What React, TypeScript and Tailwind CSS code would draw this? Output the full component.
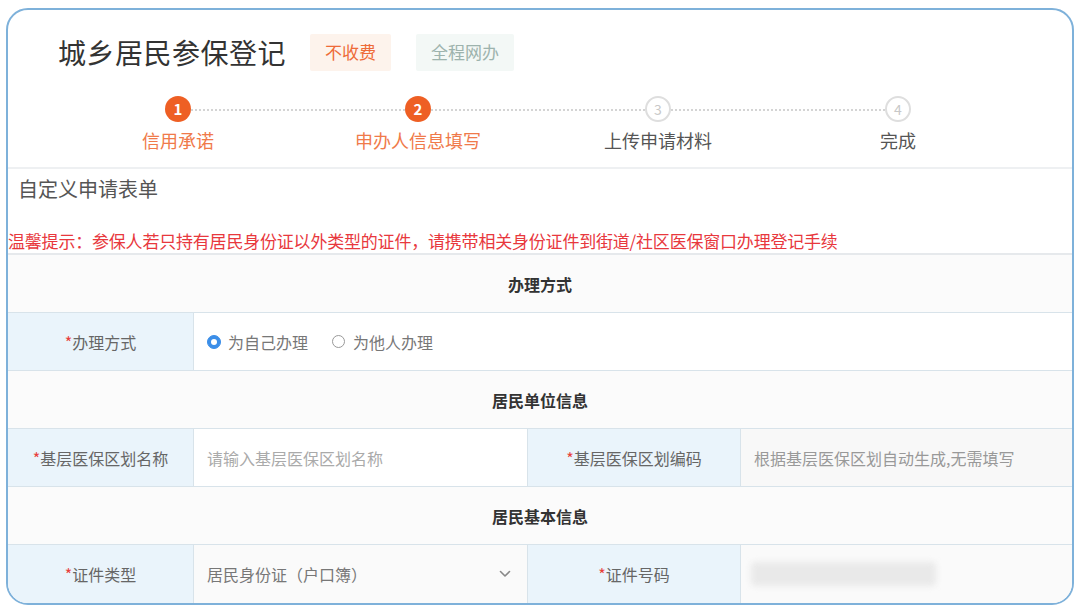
import React from 'react';

const steps = [
  { n: 1, label: '信用承诺', done: true },
  { n: 2, label: '申办人信息填写', done: true },
  { n: 3, label: '上传申请材料', done: false },
  { n: 4, label: '完成', done: false },
];

const Label = ({ text, left = false }: { text: string; left?: boolean }) => (
  <div
    className={`flex items-center justify-center bg-[#eaf4fb] text-[16px] text-[#666] ${left ? 'border-l border-[#d8e3ea]' : ''}`}
  >
    <span className="text-[#e8403a]">*</span>
    {text}
  </div>
);

const SectionRow = ({ title }: { title: string }) => (
  <div className="h-[58px] flex items-center justify-center bg-[#fbfbfb] border-b border-[#d8e3ea] text-[16px] font-bold text-[#333]">
    {title}
  </div>
);

const App: React.FC = () => {
  return (
    <div
      className="w-[1080px] h-[613px] bg-white pt-[8px] pl-[6px]"
      style={{ fontFamily: '"Noto Sans CJK SC", "Noto Sans", sans-serif' }}
    >
      <div className="w-[1068px] h-[597px] border-2 border-[#7eb1da] rounded-[22px] overflow-hidden bg-white flex flex-col">
        {/* Header */}
        <div className="h-[163px] pl-[50px] flex flex-col">
          <div className="flex items-center mt-[23px] h-[38px]">
            <h1 className="text-[28px] text-[#333] tracking-[0.5px]">城乡居民参保登记</h1>
            <span className="ml-[24px] h-[37px] px-[15px] flex items-center bg-[#fdf3ec] text-[#ee6b38] text-[17px] rounded-[2px]">不收费</span>
            <span className="ml-[25px] h-[37px] px-[15px] flex items-center bg-[#f3f8f6] text-[#9db3ad] text-[17px] rounded-[2px]">全程网办</span>
          </div>

          {/* Steps */}
          <div className="grid grid-cols-4 w-[960px] mt-[25px]">
            {steps.map((s, i) => (
              <div key={s.n} className="relative flex flex-col items-center">
                {i > 0 && (
                  <div className="absolute top-[13px] right-1/2 w-[214px] mr-[13px] border-t-2 border-dotted border-[#d4d4d4]" />
                )}
                {s.done ? (
                  <div className="w-[26px] h-[26px] rounded-full bg-[#ee5f24] text-white text-[15px] font-bold flex items-center justify-center">
                    {s.n}
                  </div>
                ) : (
                  <div className="w-[26px] h-[26px] rounded-full border-2 border-[#dedede] bg-white text-[#c8c8c8] text-[14px] flex items-center justify-center">
                    {s.n}
                  </div>
                )}
                <div className={`mt-[5px] text-[18px] ${s.done ? 'text-[#f07a4a]' : 'text-[#555]'}`}>{s.label}</div>
              </div>
            ))}
          </div>
        </div>

        {/* Form title */}
        <div className="border-t-2 border-[#eef0f2] h-[45px] flex items-center pl-[10px] text-[20px] text-[#555]">
          自定义申请表单
        </div>
        <div className="h-[45px] flex items-center pt-[18px] text-[17px] text-[#e8383d] border-b-2 border-[#e6e9ec] whitespace-nowrap tracking-[-0.2px]">
          温馨提示：参保人若只持有居民身份证以外类型的证件，请携带相关身份证件到街道/社区医保窗口办理登记手续
        </div>

        {/* Table */}
        <div className="flex flex-col">
          <SectionRow title="办理方式" />
          <div className="h-[58px] grid grid-cols-[185px_1fr] border-b border-[#d8e3ea]">
            <Label text="办理方式" />
            <div className="flex items-center pl-[13px] text-[16px] text-[#777] border-l border-[#d8e3ea]">
              <span className="w-[14px] h-[14px] rounded-full border border-[#3b8ee8] bg-[#3b8ee8] flex items-center justify-center">
                <span className="w-[6px] h-[6px] rounded-full bg-white" />
              </span>
              <span className="ml-[7px]">为自己办理</span>
              <span className="ml-[24px] w-[13px] h-[13px] rounded-full border border-[#999] bg-white" />
              <span className="ml-[8px]">为他人办理</span>
            </div>
          </div>

          <SectionRow title="居民单位信息" />
          <div className="h-[58px] grid grid-cols-[185px_334px_213px_1fr] border-b border-[#d8e3ea]">
            <Label text="基层医保区划名称" />
            <div className="flex items-center pl-[13px] text-[16px] text-[#aaa] border-l border-[#d8e3ea] bg-white">
              请输入基层医保区划名称
            </div>
            <Label text="基层医保区划编码" left />
            <div className="flex items-center pl-[13px] text-[16px] text-[#999] border-l border-[#d8e3ea] bg-[#f8f8f8]">
              根据基层医保区划自动生成,无需填写
            </div>
          </div>

          <SectionRow title="居民基本信息" />
          <div className="h-[58px] grid grid-cols-[185px_334px_213px_1fr]">
            <Label text="证件类型" />
            <div className="flex items-center justify-between pl-[13px] pr-[16px] text-[16px] text-[#777] border-l border-[#d8e3ea] bg-[#fafafa]">
              <span>居民身份证（户口簿）</span>
              <svg width="12" height="8" viewBox="0 0 12 8" fill="none">
                <path d="M1.5 1.5 L6 6 L10.5 1.5" stroke="#888" strokeWidth="1.6" strokeLinecap="round" strokeLinejoin="round" />
              </svg>
            </div>
            <Label text="证件号码" left />
            <div className="flex items-center pl-[10px] border-l border-[#d8e3ea] bg-[#fafafa]">
              <div className="w-[185px] h-[24px] bg-[#e9e9e9] rounded-[4px] blur-[3px]" />
            </div>
          </div>
        </div>
      </div>
    </div>
  );
};

export default App;
